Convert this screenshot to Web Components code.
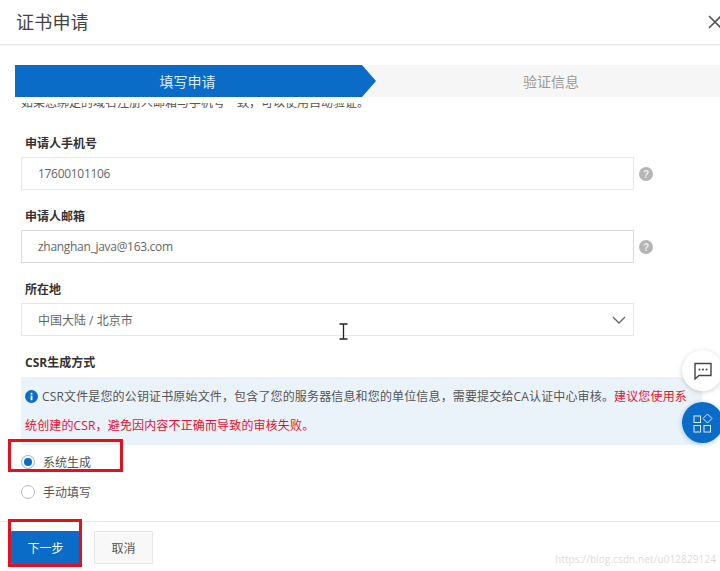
<!DOCTYPE html>
<html lang="zh">
<head>
<meta charset="utf-8">
<style>
  html, body { margin: 0; padding: 0; height: 100%; overflow: hidden; background: #fff; }
  body { font-family: "Open Sans", "Noto Sans CJK SC", sans-serif; color: #333; font-size: 12px; }
</style>
</head>
<body>
<cert-dialog>
  <step-bar slot="steps" current="填写申请" next="验证信息"></step-bar>
  <form-field label="申请人手机号" help tight>17600101106</form-field>
  <form-field label="申请人邮箱" help dark tight>zhanghan_java@163.com</form-field>
  <form-field label="所在地" select>中国大陆 / 北京市</form-field>
  <info-note label="CSR生成方式">CSR文件是您的公钥证书原始文件，包含了您的服务器信息和您的单位信息，需要提交给CA认证中心审核。<em>建议您使用系统创建的CSR，避免因内容不正确而导致的审核失败。</em></info-note>
  <radio-row checked>系统生成</radio-row>
  <radio-row>手动填写</radio-row>
</cert-dialog>
<float-buttons></float-buttons>

<script>
const dialogTemplate = document.createElement('template');
dialogTemplate.innerHTML = `<style>
  :host { display: flex; flex-direction: column; height: 571px; position: relative; overflow: hidden; }
  header { height: 44px; border-bottom: 1px solid #e8e8e8; display: flex; align-items: center; justify-content: space-between; padding-left: 17px; box-shadow: 0 1px 2px #f4f4f4; }
  h1 { margin: 0; font-size: 18px; font-weight: 400; color: #444; line-height: 44px; letter-spacing: .2px; margin-left: -1px; }
  .close { margin-right: -3px; display: block; }
  .steps { padding: 20px 0 6px 15px; }
  .scroll { height: 418px; overflow: hidden; }
  .clipped { margin: -7px 0 0 21px; height: 41px; font-size: 12px; line-height: 14px; color: #555; }
  footer { border-top: 1px solid #e6e6e6; padding: 9px 0 0 11px; display: flex; gap: 14px; }
  button { font: inherit; font-size: 12px; height: 33px; padding: 0; border-radius: 1px; }
  .next { width: 69px; background: #0a6cc7; color: #fff; border: 0; }
  .cancel { width: 59px; background: #f8f8f8; color: #555; border: 1px solid #e6e6e6; }
  .mark { position: absolute; border: 3px solid #e60f1c; box-sizing: border-box; }
  .mark.a { left: 8px; top: 439px; width: 115px; height: 33px; }
  .mark.b { left: 8px; top: 519px; width: 74px; height: 48px; }
  .water { position: absolute; left: 555px; top: 552px; font-size: 10px; line-height: 14px; letter-spacing: .1px; color: #dcdcdc; white-space: nowrap; }
  .cursor { position: absolute; left: 338px; top: 323px; }
</style>
<header>
  <h1>证书申请</h1>
  <svg class="close" width="16" height="16" viewBox="0 0 16 16"><path d="M2 2 14 14M14 2 2 14" stroke="#555" stroke-width="1.6" fill="none"/></svg>
</header>
<div class="steps"><slot name="steps"></slot></div>
<div class="scroll">
  <div class="clipped">如果您绑定的域名注册人邮箱与手机号一致，可以使用自动验证。</div>
  <div class="fields"><slot></slot></div>
</div>
<footer>
  <button class="next">下一步</button>
  <button class="cancel">取消</button>
</footer>
<div class="mark a"></div>
<div class="mark b"></div>
<div class="water">https://blog.csdn.net/u012829124</div>
<svg class="cursor" width="11" height="17" viewBox="0 0 11 17"><path d="M1.5 1H9.500M5.500 1V16M1.500 16H9.500" stroke="#222" stroke-width="1.3" fill="none"/></svg>`;

class CertDialog extends HTMLElement {
  constructor() {
    super();
    this.attachShadow({mode: 'open'}).appendChild(dialogTemplate.content.cloneNode(true));
  }
}
customElements.define('cert-dialog', CertDialog);

class StepBar extends HTMLElement {
  constructor() {
    super();
    this.attachShadow({mode: 'open'}).innerHTML = `<style>
      :host { display: flex; height: 32px; background: #f6f6f6; position: relative; }
      .on { width: 347px; background: #0a6cc7; color: #d8ecfb; display: flex; align-items: center; justify-content: center; font-size: 14px; position: relative; padding-right: 2px; box-sizing: border-box; }
      .on::after { content: ""; position: absolute; left: 100%; top: 0; border-style: solid; border-width: 16px 0 16px 14px; border-color: transparent transparent transparent #0a6cc7; }
      .off { flex: 1; color: #999; display: flex; align-items: center; justify-content: center; font-size: 14px; padding-left: 20px; }
    </style>
    <div class="on">${this.getAttribute('current')}</div>
    <div class="off">${this.getAttribute('next')}</div>`;
  }
}
customElements.define('step-bar', StepBar);

class FormField extends HTMLElement {
  constructor() {
    super();
    const help = this.hasAttribute('help') ? `<svg class="help" width="14" height="14" viewBox="0 0 14 14"><circle cx="7" cy="7" r="7" fill="#b5b5b5"/><text x="7" y="10.500" text-anchor="middle" font-size="10" font-weight="700" font-family="Liberation Sans" fill="#eee">?</text></svg>` : '';
    const arrow = this.hasAttribute('select') ? `<svg width="14" height="8" viewBox="0 0 14 8"><path d="M1 1 7 7 13 1" stroke="#666" stroke-width="1.300" fill="none"/></svg>` : '';
    this.attachShadow({mode: 'open'}).innerHTML = `<style>
      :host { display: block; padding-left: 21px; height: 73px; }
      label { display: block; padding-left: 4px; height: 14px; line-height: 14px; font-size: 12px; font-weight: 700; color: #333; margin-bottom: 6px; }
      .row { display: flex; align-items: center; gap: 5px; }
      .box { width: 613px; height: 33px; box-sizing: border-box; border: 1px solid #e8e8e8; padding: 0 7px 0 16px; display: flex; align-items: center; justify-content: space-between; color: #666; font-size: 12px; }
      :host([dark]) .box { border-color: #d9d9d9; }
      :host([tight]) span { letter-spacing: -.3px; }
    </style>
    <label>${this.getAttribute('label')}</label>
    <div class="row"><div class="box"><span><slot></slot></span>${arrow}</div>${help}</div>`;
  }
}
customElements.define('form-field', FormField);

class InfoNote extends HTMLElement {
  constructor() {
    super();
    this.attachShadow({mode: 'open'}).innerHTML = `<style>
      :host { display: block; padding-left: 21px; }
      label { display: block; padding-left: 4px; height: 14px; line-height: 14px; font-size: 12px; font-weight: 700; color: #333; margin-bottom: 7px; }
      .note { width: 681px; height: 68px; box-sizing: border-box; background: #eaf2fa; padding: 5px 8px 0 4px; color: #555; font-size: 12px; line-height: 29px; letter-spacing: .15px; }
      svg { vertical-align: -2px; margin-right: 4px; }
      ::slotted(em) { font-style: normal; color: #e8112d; }
    </style>
    <label>${this.getAttribute('label')}</label>
    <div class="note"><svg width="13" height="13" viewBox="0 0 13 13"><circle cx="6.500" cy="6.500" r="6.500" fill="#0a6cc7"/><rect x="5.600" y="5.500" width="1.800" height="4.800" fill="#fff"/><rect x="5.600" y="2.800" width="1.800" height="1.800" fill="#fff"/></svg><slot></slot></div>`;
  }
}
customElements.define('info-note', InfoNote);

class RadioRow extends HTMLElement {
  constructor() {
    super();
    this.attachShadow({mode: 'open'}).innerHTML = `<style>
      :host { display: flex; align-items: center; gap: 8px; padding-left: 21px; height: 30px; color: #555; font-size: 12px; }
      :host(:first-of-type) { margin-top: 2px; }
      .dot { width: 14px; height: 14px; box-sizing: border-box; border: 1px solid #bbb; border-radius: 50%; background: #fff; display: flex; align-items: center; justify-content: center; }
      :host([checked]) .dot { border-color: #8fb8dd; }
      :host([checked]) .dot::after { content: ""; width: 8px; height: 8px; border-radius: 50%; background: #0a6cc7; }
    </style>
    <span class="dot"></span><span><slot></slot></span>`;
  }
}
customElements.define('radio-row', RadioRow);

class FloatButtons extends HTMLElement {
  constructor() {
    super();
    this.attachShadow({mode: 'open'}).innerHTML = `<style>
      :host { position: absolute; left: 682px; top: 350px; display: flex; flex-direction: column; gap: 11px; }
      div { width: 41px; height: 41px; border-radius: 50%; display: flex; align-items: center; justify-content: center; }
      .chat { background: #fff; box-shadow: 0 1px 5px rgba(0,0,0,.18); }
      .apps { background: #0a6cc7; box-shadow: 0 1px 5px rgba(10,108,199,.35); }
    </style>
    <div class="chat"><svg width="18" height="18" viewBox="0 0 18 18"><path d="M1 1.500H17V13.500H5L1 17Z" fill="none" stroke="#444" stroke-width="1.400"/><circle cx="5.500" cy="7.500" r="1" fill="#444"/><circle cx="9" cy="7.500" r="1" fill="#444"/><circle cx="12.500" cy="7.500" r="1" fill="#444"/></svg></div>
    <div class="apps"><svg width="20" height="20" viewBox="0 0 20 20"><g fill="none" stroke="#dcebf8" stroke-width="1"><rect x="1" y="3" width="6.500" height="6.500"/><path d="M14.500 1 19 5.500 14.500 10 10 5.500Z"/><rect x="1" y="12.500" width="6.500" height="6.500"/><rect x="11" y="12.500" width="6.500" height="6.500"/></g></svg></div>`;
  }
}
customElements.define('float-buttons', FloatButtons);
</script>
</body>
</html>
